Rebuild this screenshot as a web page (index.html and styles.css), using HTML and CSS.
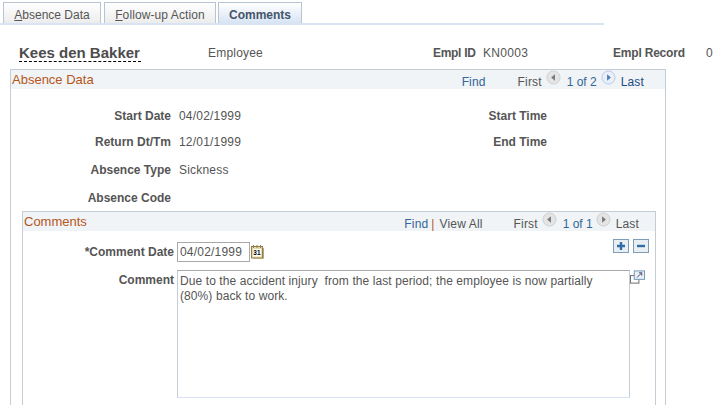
FILE: index.html
```html
<!DOCTYPE html>
<html lang="en">
<head>
    <meta charset="UTF-8">
    <title>Comments</title>
    <link rel="stylesheet" href="styles.css">
</head>
<body>
    <div class="tabs">
        <a class="tab tab-absence"><u>A</u>bsence Data</a>
        <a class="tab tab-followup"><u>F</u>ollow-up Action</a>
        <a class="tab tab-comments active">Comments</a>
    </div>

    <div class="employee">
        <h1 class="name">Kees den Bakker</h1>
        <span class="role">Employee</span>
        <b class="id-label">Empl ID</b>
        <span class="id-value">KN0003</span>
        <b class="record-label">Empl Record</b>
        <span class="record-value">0</span>
    </div>

    <div class="box outer">
        <div class="box-head">
            <span class="box-title">Absence Data</span>
            <div class="nav nav-outer">
                <a class="find">Find</a>
                <span class="first">First</span>
                <svg class="arrow" viewBox="0 0 16 16"><circle cx="8" cy="8" r="7" fill="#e4e4e4" stroke="#cfcfcf"/><path d="M9.5 4.5v7L5.5 8z" fill="#777"/></svg>
                <a class="count">1 of 2</a>
                <svg class="arrow" viewBox="0 0 16 16"><circle cx="8" cy="8" r="7" fill="#e8eefa" stroke="#b9c9e6"/><path d="M6.5 4.5v7l4-3.500z" fill="#4a7ab0"/></svg>
                <a class="last">Last</a>
            </div>
        </div>

        <div class="fields">
            <b class="label">Start Date</b><span class="value">04/02/1999</span>
            <b class="label">Start Time</b>
            <b class="label">Return Dt/Tm</b><span class="value">12/01/1999</span>
            <b class="label">End Time</b>
            <b class="label">Absence Type</b><span class="value wide">Sickness</span>
            <b class="label">Absence Code</b><span class="value wide"></span>
        </div>

        <div class="box inner">
            <div class="box-head">
                <span class="box-title">Comments</span>
                <div class="nav nav-inner">
                    <a class="find">Find</a>
                    <i class="sep">|</i>
                    <span class="view-all">View All</span>
                    <span class="first">First</span>
                    <svg class="arrow" viewBox="0 0 16 16"><circle cx="8" cy="8" r="7" fill="#e4e4e4" stroke="#cfcfcf"/><path d="M9.500 4.500v7L5.500 8z" fill="#777"/></svg>
                    <a class="count">1 of 1</a>
                    <svg class="arrow" viewBox="0 0 16 16"><circle cx="8" cy="8" r="7" fill="#e4e4e4" stroke="#cfcfcf"/><path d="M6.500 4.500v7l4-3.500z" fill="#777"/></svg>
                    <span class="last-off">Last</span>
                </div>
            </div>

            <div class="comment-form">
                <div class="date-row">
                    <b class="form-label">*Comment Date</b>
                    <input class="date-input" type="text" value="04/02/1999">
                    <svg class="cal" viewBox="0 0 13 14">
                        <rect x="0.500" y="1.500" width="11" height="11.500" fill="#e8d9a8" stroke="#8f7f50"/>
                        <rect x="2" y="4" width="8" height="7.500" fill="#fff"/>
                        <path d="M2.500 0v3M6 0v3M9.500 0v3" stroke="#8f7f50"/>
                        <path d="M12.500 3v10.500H2" fill="none" stroke="#b8a878"/>
                        <text x="2.300" y="10" class="cal-day">31</text>
                    </svg>
                    <div class="row-btns">
                        <a class="row-btn"><svg viewBox="0 0 14 12"><path d="M7 2v8M3 6h8" stroke="#2f6da8" stroke-width="2.400"/></svg></a>
                        <a class="row-btn"><svg viewBox="0 0 14 12"><path d="M3 6h8" stroke="#2f6da8" stroke-width="2.400"/></svg></a>
                    </div>
                </div>
                <div class="comment-row">
                    <b class="form-label">Comment</b>
                    <div class="comment-text">Due to the accident injury&nbsp; from the last period; the employee is now partially (80%) back to work.</div>
                    <svg class="expand" viewBox="0 0 16 14">
                        <rect x="0.500" y="5.500" width="9" height="8" fill="#fff" stroke="#666"/>
                        <rect x="4.500" y="0.500" width="11" height="9" fill="#e9eff6" stroke="#6f93b3"/>
                        <path d="M7.500 7.500l5-5M9.500 2.500h3v3" fill="none" stroke="#446"/>
                    </svg>
                </div>
            </div>
        </div>
    </div>
</body>
</html>
```

FILE: styles.css
```css
/* Page */
html, body {
    height: 405px;
    overflow: hidden;
}
body {
    margin: 0;
    background-color: #ffffff;
    color: #555555;
    font-family: "Liberation Sans", Arial, sans-serif;
    font-size: 12px;
}
a {
    color: #336699;
}

/* Tabs */
.tabs {
    display: flex;
    width: 601px;
    height: 21px;
    margin-top: 2px;
    padding-left: 3px;
    border-bottom: 2px solid #d8e4f4;
}
.tab {
    box-sizing: border-box;
    height: 21px;
    margin-right: 3px;
    padding-top: 5px;
    text-align: center;
    color: #555555;
    background: linear-gradient(#ffffff, #ececec);
    border: 1px solid #b8c4d2;
    border-bottom: none;
}
.tab-absence {
    width: 98px;
}
.tab-followup {
    width: 112px;
    margin-right: 2px;
    letter-spacing: 0.1px;
}
.tab-comments {
    width: 84px;
}
.tab.active {
    font-weight: bold;
    color: #44556a;
    background: linear-gradient(#ffffff, #d8e4f4);
}

/* Employee header */
.employee {
    display: flex;
    align-items: center;
    height: 18px;
    margin-top: 19px;
    padding-left: 19px;
    white-space: nowrap;
}
.name {
    width: 122px;
    margin: 0 67px 0 0;
    font-size: 15px;
    line-height: 17px;
    color: #4d4d4d;
    border-bottom: 1px dashed #000000;
}
.role {
    width: 225px;
    letter-spacing: 0.2px;
}
.id-label {
    width: 50px;
    letter-spacing: -0.3px;
}
.id-value {
    width: 130px;
    letter-spacing: 0.3px;
}
.record-label {
    width: 93px;
    letter-spacing: -0.2px;
}

/* Scroll areas */
.box {
    border: 1px solid #c4cdd6;
    border-bottom: none;
}
.outer {
    box-sizing: border-box;
    width: 656px;
    height: 336px;
    margin: 7px 0 0 10px;
}
.inner {
    box-sizing: border-box;
    width: 634px;
    height: 194px;
    margin: 0 0 0 11px;
}
.box-head {
    display: flex;
    align-items: center;
    height: 19px;
    padding-left: 1px;
    background-color: #f0f4f6;
    white-space: nowrap;
}
.box-title {
    font-size: 13px;
    color: #b5561a;
}
.nav {
    display: flex;
    align-items: center;
    margin-left: auto;
    padding-top: 5px;
    letter-spacing: 0.15px;
}
.nav-outer {
    padding-right: 21px;
}
.nav-inner {
    padding-right: 16px;
}
.nav-inner .first {
    margin-left: 31px;
}
.nav-inner .count {
    margin-right: -1px;
}
.arrow {
    width: 15px;
    height: 15px;
    margin: -9px 4px 0;
}
.first, .last-off, .view-all {
    color: #555555;
}
.first {
    margin-left: 32px;
}
.sep {
    margin: 0 5px 0 3px;
    font-style: normal;
    color: #b5561a;
}
.count {
    margin: 0 0 0 2px;
    letter-spacing: 0;
}
.last {
    margin-left: 1px;
    color: #1d4a82;
}
.last-off {
    margin-left: 1px;
}

/* Absence fields */
.fields {
    display: grid;
    box-sizing: border-box;
    grid-template-columns: 160px 294px 66px;
    grid-template-rows: 26px 26px 30px 26px;
    column-gap: 8px;
    align-items: center;
    height: 122px;
    padding-top: 14px;
}
.label {
    text-align: right;
}
.value {
    letter-spacing: 0.2px;
}
.wide {
    grid-column: 2 / 4;
}

/* Comment entry */
.comment-form {
    padding-top: 11px;
}
.date-row {
    display: flex;
    align-items: center;
    height: 20px;
}
.form-label {
    flex: none;
    width: 151px;
    margin-right: 3px;
    text-align: right;
}
.date-input {
    box-sizing: border-box;
    width: 73px;
    height: 20px;
    padding: 0 2px;
    border: 1px solid #a9a9a9;
    color: #555555;
    font: 12px "Liberation Sans", Arial, sans-serif;
    letter-spacing: 0.2px;
}
.cal {
    width: 13px;
    height: 14px;
    margin-left: 1px;
}
.cal-day {
    font-size: 6.500px;
    font-weight: bold;
    fill: #000000;
}
.row-btns {
    display: flex;
    gap: 4px;
    align-self: flex-start;
    margin: -3px 6px 0 auto;
}
.row-btn {
    display: block;
    width: 14px;
    height: 12px;
    border: 1px solid #7f9db9;
    background-color: #e8eef2;
}
.row-btn svg {
    display: block;
    width: 14px;
    height: 12px;
}
.comment-row {
    display: flex;
    align-items: flex-start;
    margin-top: 8px;
}
.comment-row .form-label {
    padding-top: 3px;
}
.comment-text {
    box-sizing: border-box;
    width: 453px;
    height: 128px;
    padding: 3px 30px 3px 2px;
    line-height: 15px;
    letter-spacing: 0.09px;
    border: 1px solid #c4cdd6;
    border-top-color: #a9a9a9;
    border-bottom-color: #d8e4f4;
}
.expand {
    width: 15px;
    height: 14px;
}
```
